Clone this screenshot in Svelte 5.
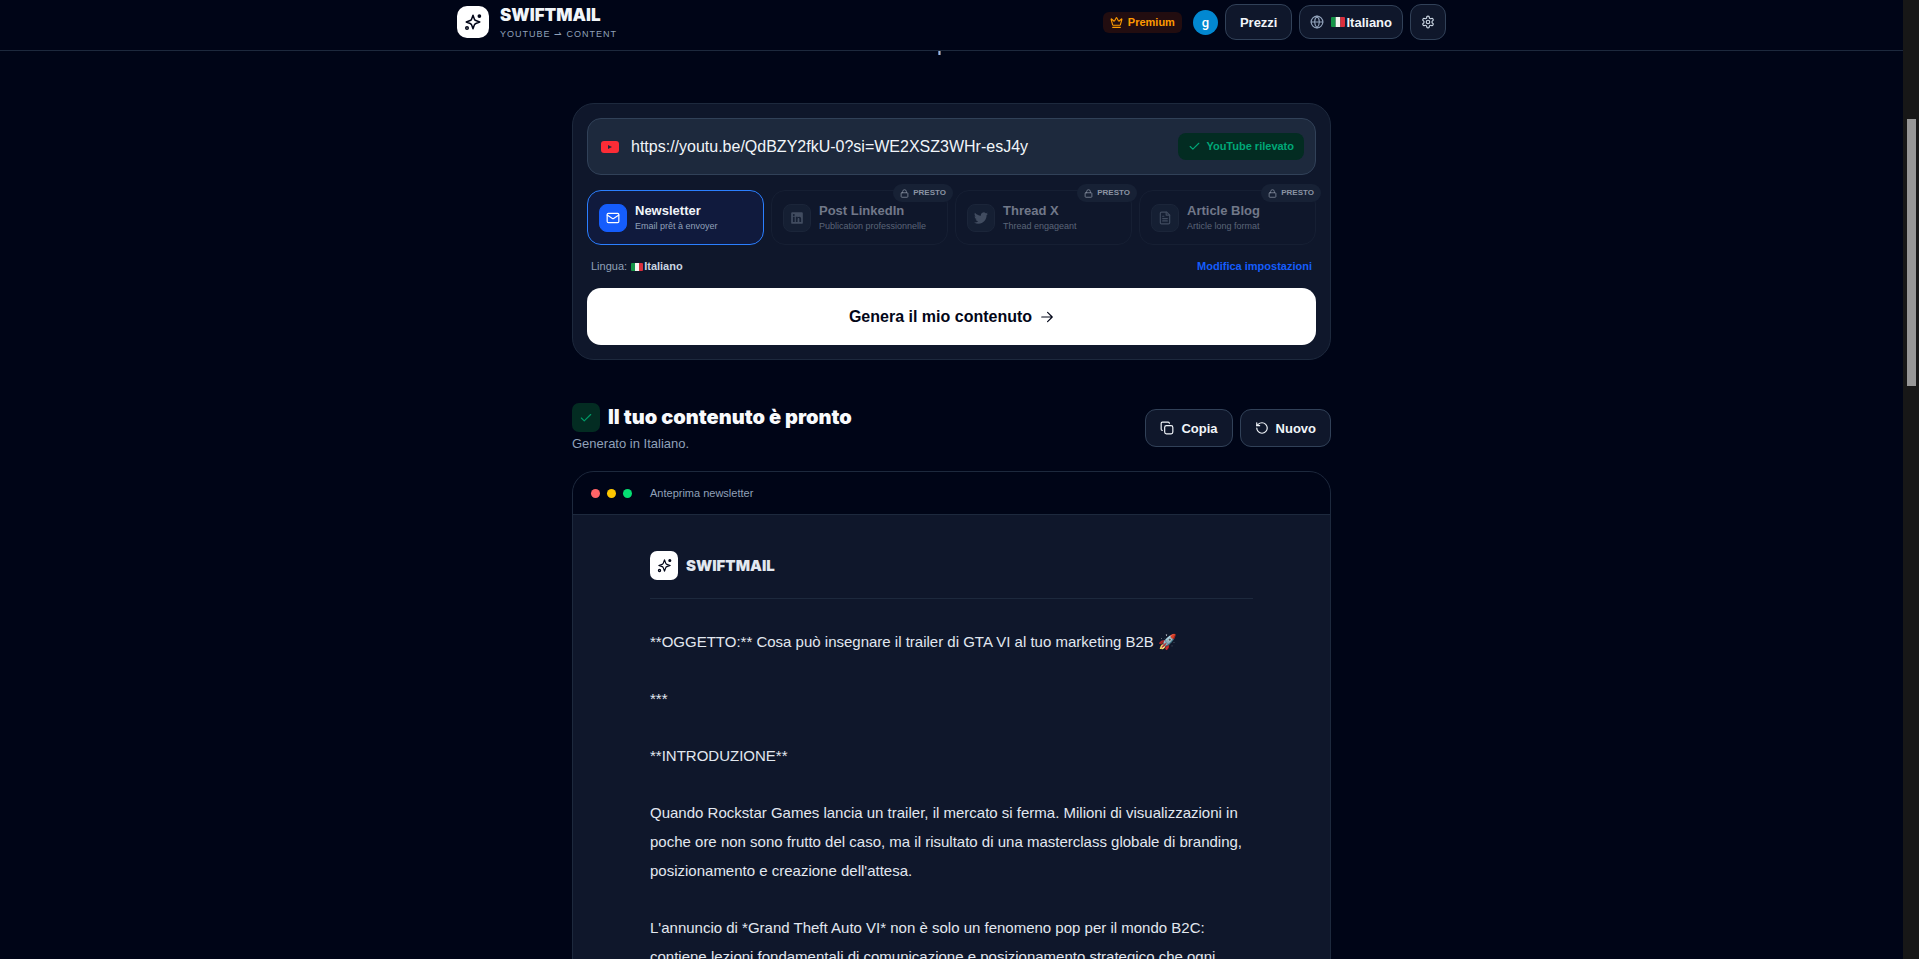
<script>
    let url = $state("https://youtu.be/QdBZY2fkU-0?si=WE2XSZ3WHr-esJ4y");
    let selected = $state("newsletter");

    const formats = [
        { id: "newsletter", title: "Newsletter", desc: "Email prêt à envoyer" },
        { id: "linkedin", title: "Post LinkedIn", desc: "Publication professionnelle", soon: true },
        { id: "thread", title: "Thread X", desc: "Thread engageant", soon: true },
        { id: "blog", title: "Article Blog", desc: "Article long format", soon: true },
    ];

    const paragraphs = [
        "**OGGETTO:** Cosa può insegnare il trailer di GTA VI al tuo marketing B2B 🚀",
        "***",
        "**INTRODUZIONE**",
        "Quando Rockstar Games lancia un trailer, il mercato si ferma. Milioni di visualizzazioni in poche ore non sono frutto del caso, ma il risultato di una masterclass globale di branding, posizionamento e creazione dell'attesa.",
        "L'annuncio di *Grand Theft Auto VI* non è solo un fenomeno pop per il mondo B2C: contiene lezioni fondamentali di comunicazione e posizionamento strategico che ogni",
    ];

    // 24x24 stroke icons
    const icons = {
        crown: '<path d="M11.562 3.266a.5.5 0 0 1 .876 0L15.39 8.87a1 1 0 0 0 1.516.294L21.183 5.5a.5.5 0 0 1 .798.519l-2.834 10.246a1 1 0 0 1-.956.734H5.81a1 1 0 0 1-.957-.734L2.02 6.02a.5.5 0 0 1 .798-.519l4.276 3.664a1 1 0 0 0 1.516-.294z"/><path d="M5 21h14"/>',
        globe: '<circle cx="12" cy="12" r="10"/><path d="M12 2a14.5 14.5 0 0 0 0 20 14.5 14.5 0 0 0 0-20"/><path d="M2 12h20"/>',
        gear: '<path d="M12.22 2h-.44a2 2 0 0 0-2 2v.18a2 2 0 0 1-1 1.73l-.43.25a2 2 0 0 1-2 0l-.15-.08a2 2 0 0 0-2.73.73l-.22.38a2 2 0 0 0 .73 2.73l.15.1a2 2 0 0 1 1 1.72v.51a2 2 0 0 1-1 1.74l-.15.09a2 2 0 0 0-.73 2.73l.22.38a2 2 0 0 0 2.73.73l.15-.08a2 2 0 0 1 2 0l.43.25a2 2 0 0 1 1 1.73V20a2 2 0 0 0 2 2h.44a2 2 0 0 0 2-2v-.18a2 2 0 0 1 1-1.73l.43-.25a2 2 0 0 1 2 0l.15.08a2 2 0 0 0 2.73-.73l.22-.39a2 2 0 0 0-.73-2.73l-.15-.08a2 2 0 0 1-1-1.74v-.5a2 2 0 0 1 1-1.74l.15-.09a2 2 0 0 0 .73-2.73l-.22-.38a2 2 0 0 0-2.73-.73l-.15.08a2 2 0 0 1-2 0l-.43-.25a2 2 0 0 1-1-1.73V4a2 2 0 0 0-2-2z"/><circle cx="12" cy="12" r="3"/>',
        check: '<path d="M20 6 9 17l-5-5"/>',
        lock: '<rect width="18" height="12" x="3" y="10" rx="2"/><path d="M7 10V7a5 5 0 0 1 10 0v3"/>',
        newsletter: '<rect width="20" height="16" x="2" y="4" rx="2"/><path d="m22 7-8.97 5.7a1.94 1.94 0 0 1-2.06 0L2 7"/>',
        linkedin: '<path fill="currentColor" fill-rule="evenodd" stroke="none" d="M4 2h16a2 2 0 0 1 2 2v16a2 2 0 0 1-2 2H4a2 2 0 0 1-2-2V4a2 2 0 0 1 2-2zM5 10v9h3v-9zM6.5 5a1.7 1.7 0 1 0 0 3.4a1.7 1.7 0 0 0 0-3.4zM10 10v9h3v-5c0-1.2.6-2 1.6-2s1.5.8 1.5 2v5h3v-5.6c0-2.3-1.3-3.6-3.2-3.6-1.3 0-2.3.6-2.9 1.5V10z"/>',
        thread: '<path fill="currentColor" stroke="none" d="M23.95 4.57a10 10 0 0 1-2.82.77 4.96 4.96 0 0 0 2.16-2.72c-.95.55-2 .95-3.13 1.18a4.92 4.92 0 0 0-8.38 4.48C7.69 8.09 4.07 6.13 1.64 3.16a4.82 4.82 0 0 0-.67 2.48c0 1.71.87 3.21 2.19 4.1a4.9 4.9 0 0 1-2.23-.62v.06a4.92 4.92 0 0 0 3.95 4.83 5 5 0 0 1-2.21.08 4.94 4.94 0 0 0 4.6 3.42A9.87 9.87 0 0 1 0 19.54a13.99 13.99 0 0 0 7.56 2.21c9.05 0 14-7.5 14-13.99 0-.21 0-.42-.02-.63a9.94 9.94 0 0 0 2.41-2.56z"/>',
        blog: '<path d="M15 2H6a2 2 0 0 0-2 2v16a2 2 0 0 0 2 2h12a2 2 0 0 0 2-2V7z"/><path d="M14 2v5h6M8 9h2M8 13h8M8 17h8"/>',
        arrow: '<path d="M3 12h18M13 4l8 8-8 8"/>',
        copy: '<rect width="14" height="14" x="8" y="8" rx="3"/><path d="M4 16c-1.1 0-2-.9-2-2V4c0-1.1.9-2 2-2h10c1.1 0 2 .9 2 2"/>',
        reset: '<path d="M3 12a9 9 0 1 0 9-9 9.75 9.75 0 0 0-6.74 2.74L3 8"/><path d="M3 3v5h5"/>',
        sparkles: '<path d="M12 3l1.9 5.2a3.2 3.2 0 0 0 1.9 1.9L21 12l-5.2 1.9a3.2 3.2 0 0 0-1.9 1.9L12 21l-1.9-5.2a3.2 3.2 0 0 0-1.9-1.9L3 12l5.2-1.9a3.2 3.2 0 0 0 1.9-1.9z"/><circle cx="20.500" cy="4" r="1.500" fill="currentColor"/><circle cx="4" cy="20" r="1.700"/>',
    };
</script>

{#snippet icon(name, size)}
    <svg
        width={size}
        height={size}
        viewBox="0 0 24 24"
        fill="none"
        stroke="currentColor"
        stroke-width="2"
        stroke-linecap="round"
        stroke-linejoin="round"
        aria-hidden="true">{@html icons[name]}</svg
    >
{/snippet}

{#snippet flag(width, height)}
    <svg class="flag" {width} {height} viewBox="0 0 15 10" preserveAspectRatio="none" aria-hidden="true">
        <path fill="#159447" d="M0 0h5v10H0z" />
        <path fill="#f4f5f0" d="M5 0h5v10H5z" />
        <path fill="#d92f3d" d="M10 0h5v10h-5z" />
    </svg>
{/snippet}

<div class="app">
    <div class="page">
        <header>
            <div class="bar">
                <a class="brand" href="#home">
                    <span class="logo">{@render icon("sparkles", 18)}</span>
                    <span class="names">
                        <strong>SWIFTMAIL</strong>
                        <small>YOUTUBE ⇀ CONTENT</small>
                    </span>
                </a>
                <nav>
                    <span class="premium">{@render icon("crown", 13)}Premium</span>
                    <button class="avatar" aria-label="Account">g</button>
                    <button class="btn prices">Prezzi</button>
                    <button class="btn lang">
                        {@render icon("globe", 14)}
                        <span class="flagged">{@render flag(14, 10)}Italiano</span>
                    </button>
                    <button class="btn settings" aria-label="Impostazioni">{@render icon("gear", 14)}</button>
                </nav>
            </div>
        </header>

        <main>
            <form class="generator" onsubmit={(e) => e.preventDefault()}>
                <div class="url">
                    <svg width="18" height="14" viewBox="0 0 18 14" aria-hidden="true">
                        <rect width="18" height="12" y="1" rx="3" fill="#fb2c36" />
                        <path fill="#1d293d" d="M7 5l4 2-4 2z" />
                    </svg>
                    <input type="text" aria-label="Link YouTube" bind:value={url} spellcheck="false" />
                    <span class="detected">{@render icon("check", 13)}YouTube rilevato</span>
                </div>

                <div class="formats">
                    {#each formats as format (format.id)}
                        <button
                            type="button"
                            class="format"
                            class:active={selected === format.id}
                            class:soon={format.soon}
                            disabled={format.soon}
                            onclick={() => (selected = format.id)}
                        >
                            <span class="tile">{@render icon(format.id, 14)}</span>
                            <span class="label">
                                <strong>{format.title}</strong>
                                <small>{format.desc}</small>
                            </span>
                            {#if format.soon}
                                <span class="badge">{@render icon("lock", 9)}PRESTO</span>
                            {/if}
                        </button>
                    {/each}
                </div>

                <div class="meta">
                    <span class="flagged">Lingua:&nbsp;{@render flag(12, 8)}<strong>Italiano</strong></span>
                    <a href="#settings">Modifica impostazioni</a>
                </div>

                <button class="generate">Genera il mio contenuto {@render icon("arrow", 14)}</button>
            </form>

            <section class="result">
                <div>
                    <h2><span class="done">{@render icon("check", 14)}</span>Il tuo contenuto è pronto</h2>
                    <p>Generato in Italiano.</p>
                </div>
                <div class="actions">
                    <button class="btn">{@render icon("copy", 14)}Copia</button>
                    <button class="btn">{@render icon("reset", 14)}Nuovo</button>
                </div>
            </section>

            <section class="preview">
                <div class="window-bar">
                    <i class="red"></i><i class="yellow"></i><i class="green"></i>
                    <span>Anteprima newsletter</span>
                </div>
                <article>
                    <div class="masthead">
                        <span class="logo small">{@render icon("sparkles", 15)}</span>
                        <strong>SWIFTMAIL</strong>
                    </div>
                    {#each paragraphs as text}
                        <p>{text}</p>
                    {/each}
                </article>
            </section>
        </main>
    </div>
    <div class="scrollbar" aria-hidden="true"><div class="thumb"></div></div>
</div>

<style>
    :global(body) {
        margin: 0;
        background: #000517;
    }
    .app {
        display: flex;
        height: 100vh;
        overflow: hidden;
        color: #f1f5f9;
        font-family: "Liberation Sans", Arial, sans-serif;
        font-size: 13px;
    }
    .app :global(svg) {
        flex-shrink: 0;
    }
    .page {
        flex: 1;
        min-width: 0;
        overflow: hidden;
    }
    button,
    input {
        font: inherit;
        color: inherit;
    }
    button {
        cursor: pointer;
    }
    a {
        text-decoration: none;
    }
    header {
        position: relative;
        border-bottom: 1px solid #1d293d;
        background: #000517;
    }
    /* descender of the hero line that has scrolled under the header */
    header::after {
        content: "";
        position: absolute;
        top: 100%;
        left: 50%;
        width: 3px;
        height: 4px;
        margin: 1px 0 0 -14px;
        background: linear-gradient(90deg, #3058a0, #a0b8d8, #604030);
    }
    .bar {
        display: flex;
        align-items: center;
        justify-content: space-between;
        max-width: 989px;
        height: 50px;
        margin: 0 auto;
        padding-bottom: 6px;
        box-sizing: border-box;
    }
    .brand {
        display: flex;
        align-items: center;
        gap: 11px;
        color: #f1f5f9;
    }
    .logo {
        display: grid;
        place-items: center;
        width: 32px;
        height: 32px;
        border-radius: 10px;
        background: #fff;
        color: #020618;
    }
    .logo.small {
        width: 28px;
        height: 29px;
        border-radius: 7px;
    }
    .names {
        display: flex;
        flex-direction: column;
    }
    .names strong {
        font-family: Inter, sans-serif;
        font-size: 17px;
        font-weight: 900;
        line-height: 23px;
    }
    .names small {
        color: #90a1b9;
        font-size: 9px;
        line-height: 14px;
        letter-spacing: 1px;
    }
    nav {
        display: flex;
        align-items: center;
        gap: 7px;
    }
    .premium {
        display: flex;
        align-items: center;
        gap: 5px;
        margin-right: 4px;
        padding: 0 7px;
        border-radius: 6px;
        background: #220d10;
        color: #fe9a00;
        font-size: 11px;
        font-weight: 700;
        line-height: 21px;
    }
    .avatar {
        width: 25px;
        height: 25px;
        padding: 0;
        border: 0;
        border-radius: 50%;
        background: #0288d1;
        color: #fff;
        font-family: Roboto, sans-serif;
        font-size: 13px;
        font-weight: 500;
    }
    .btn {
        display: flex;
        align-items: center;
        justify-content: center;
        gap: 7px;
        height: 38px;
        padding: 0 14px;
        border: 1px solid #314158;
        border-radius: 11px;
        background: #0f172b;
        font-weight: 700;
    }
    .prices,
    .settings {
        height: 36px;
    }
    .settings {
        width: 36px;
        padding: 0;
        color: #cad5e2;
    }
    .lang {
        height: 34px;
        padding: 0 10px;
    }
    .lang > :global(svg) {
        color: #90a1b9;
    }
    .flagged {
        display: flex;
        align-items: center;
        gap: 1px;
    }
    .flag {
        border-radius: 1px;
    }

    main {
        max-width: 759px;
        margin: 52px auto 0;
    }
    .generator {
        padding: 14px;
        border: 1px solid #1d293d;
        border-radius: 22px;
        background: #0f172b;
    }
    .url {
        display: flex;
        align-items: center;
        gap: 12px;
        height: 55px;
        padding: 0 11px 0 13px;
        border: 1px solid #314158;
        border-radius: 14px;
        background: #1d293d;
    }
    .url input {
        flex: 1;
        min-width: 0;
        padding: 0;
        border: 0;
        outline: 0;
        background: none;
        font-size: 16px;
    }
    .detected {
        display: flex;
        align-items: center;
        gap: 5px;
        padding: 0 10px;
        border-radius: 8px;
        background: #032c22;
        color: #00a878;
        font-size: 11px;
        font-weight: 700;
        line-height: 27px;
    }
    .formats {
        display: grid;
        grid-template-columns: repeat(4, 1fr);
        gap: 7px;
        margin-top: 15px;
    }
    .format {
        position: relative;
        display: flex;
        align-items: center;
        gap: 8px;
        height: 55px;
        padding: 0 11px;
        border: 1px solid #161f33;
        border-radius: 14px;
        background: #0f172b;
        text-align: left;
    }
    .format.active {
        border-color: #2b7fff;
        background: #101a3d;
    }
    .format.soon {
        color: #717889;
        cursor: default;
    }
    .tile {
        display: grid;
        place-items: center;
        width: 28px;
        height: 28px;
        border: 1px solid #1b2539;
        border-radius: 8px;
        box-sizing: border-box;
        background: #151f33;
        color: #414c60;
    }
    .active .tile {
        border-color: #155dfc;
        background: #155dfc;
        color: #fff;
    }
    .label strong,
    .label small {
        display: block;
    }
    .label strong {
        line-height: 17px;
    }
    .label small {
        color: #5b6578;
        font-size: 9px;
        line-height: 15px;
        white-space: nowrap;
    }
    .active small {
        color: #90a1b9;
    }
    .badge {
        position: absolute;
        top: -7px;
        right: -6px;
        display: flex;
        align-items: center;
        gap: 4px;
        padding: 0 7px;
        border-radius: 9px;
        background: #172135;
        color: #8a93a3;
        font-size: 8px;
        font-weight: 700;
        line-height: 18px;
    }
    .meta {
        display: flex;
        justify-content: space-between;
        padding: 14px 4px;
        color: #90a1b9;
        font-size: 11px;
        line-height: 15px;
    }
    .meta strong {
        color: #cad5e2;
    }
    .meta a {
        color: #155dfc;
        font-weight: 700;
    }
    .generate {
        display: flex;
        align-items: center;
        justify-content: center;
        gap: 8px;
        width: 100%;
        height: 57px;
        border: 0;
        border-radius: 14px;
        background: #fff;
        color: #020618;
        font-size: 16px;
        font-weight: 700;
    }

    .result {
        display: flex;
        align-items: center;
        justify-content: space-between;
        margin: 43px 0 18px;
    }
    h2 {
        display: flex;
        align-items: center;
        gap: 8px;
        margin: 0;
        color: #f8fafc;
        font-family: Inter, sans-serif;
        font-size: 20px;
        font-weight: 900;
        line-height: 29px;
    }
    .done {
        display: grid;
        place-items: center;
        width: 28px;
        height: 29px;
        border-radius: 7px;
        background: #032c22;
        color: #009966;
    }
    .result p {
        margin: 3px 0 0;
        color: #90a1b9;
        line-height: 18px;
    }
    .actions {
        display: flex;
        gap: 7px;
    }

    .preview {
        overflow: hidden;
        border: 1px solid #1d293d;
        border-radius: 22px;
        background: #0f172b;
    }
    .window-bar {
        display: flex;
        align-items: center;
        gap: 7px;
        height: 42px;
        padding: 0 18px;
        border-bottom: 1px solid #1d293d;
        background: #000517;
        color: #90a1b9;
        font-size: 11px;
    }
    .window-bar i {
        width: 9px;
        height: 9px;
        border-radius: 50%;
    }
    .window-bar span {
        margin-left: 11px;
    }
    .red {
        background: #ff6467;
    }
    .yellow {
        background: #fdc700;
    }
    .green {
        background: #05df72;
    }
    article {
        max-width: 603px;
        margin: 0 auto;
        padding: 36px 0;
        color: #e2e8f0;
        font-size: 15px;
        line-height: 29px;
    }
    article p {
        margin: 0 0 28px;
    }
    .masthead {
        display: flex;
        align-items: center;
        gap: 8px;
        margin-bottom: 28px;
        padding-bottom: 18px;
        border-bottom: 1px solid #1d293d;
        font-family: Inter, sans-serif;
    }
    .masthead strong {
        font-size: 15px;
        font-weight: 900;
    }

    .scrollbar {
        width: 16px;
        background: #171717;
    }
    .thumb {
        width: 9px;
        height: 267px;
        margin: 119px auto 0;
        background: #969696;
    }
</style>
